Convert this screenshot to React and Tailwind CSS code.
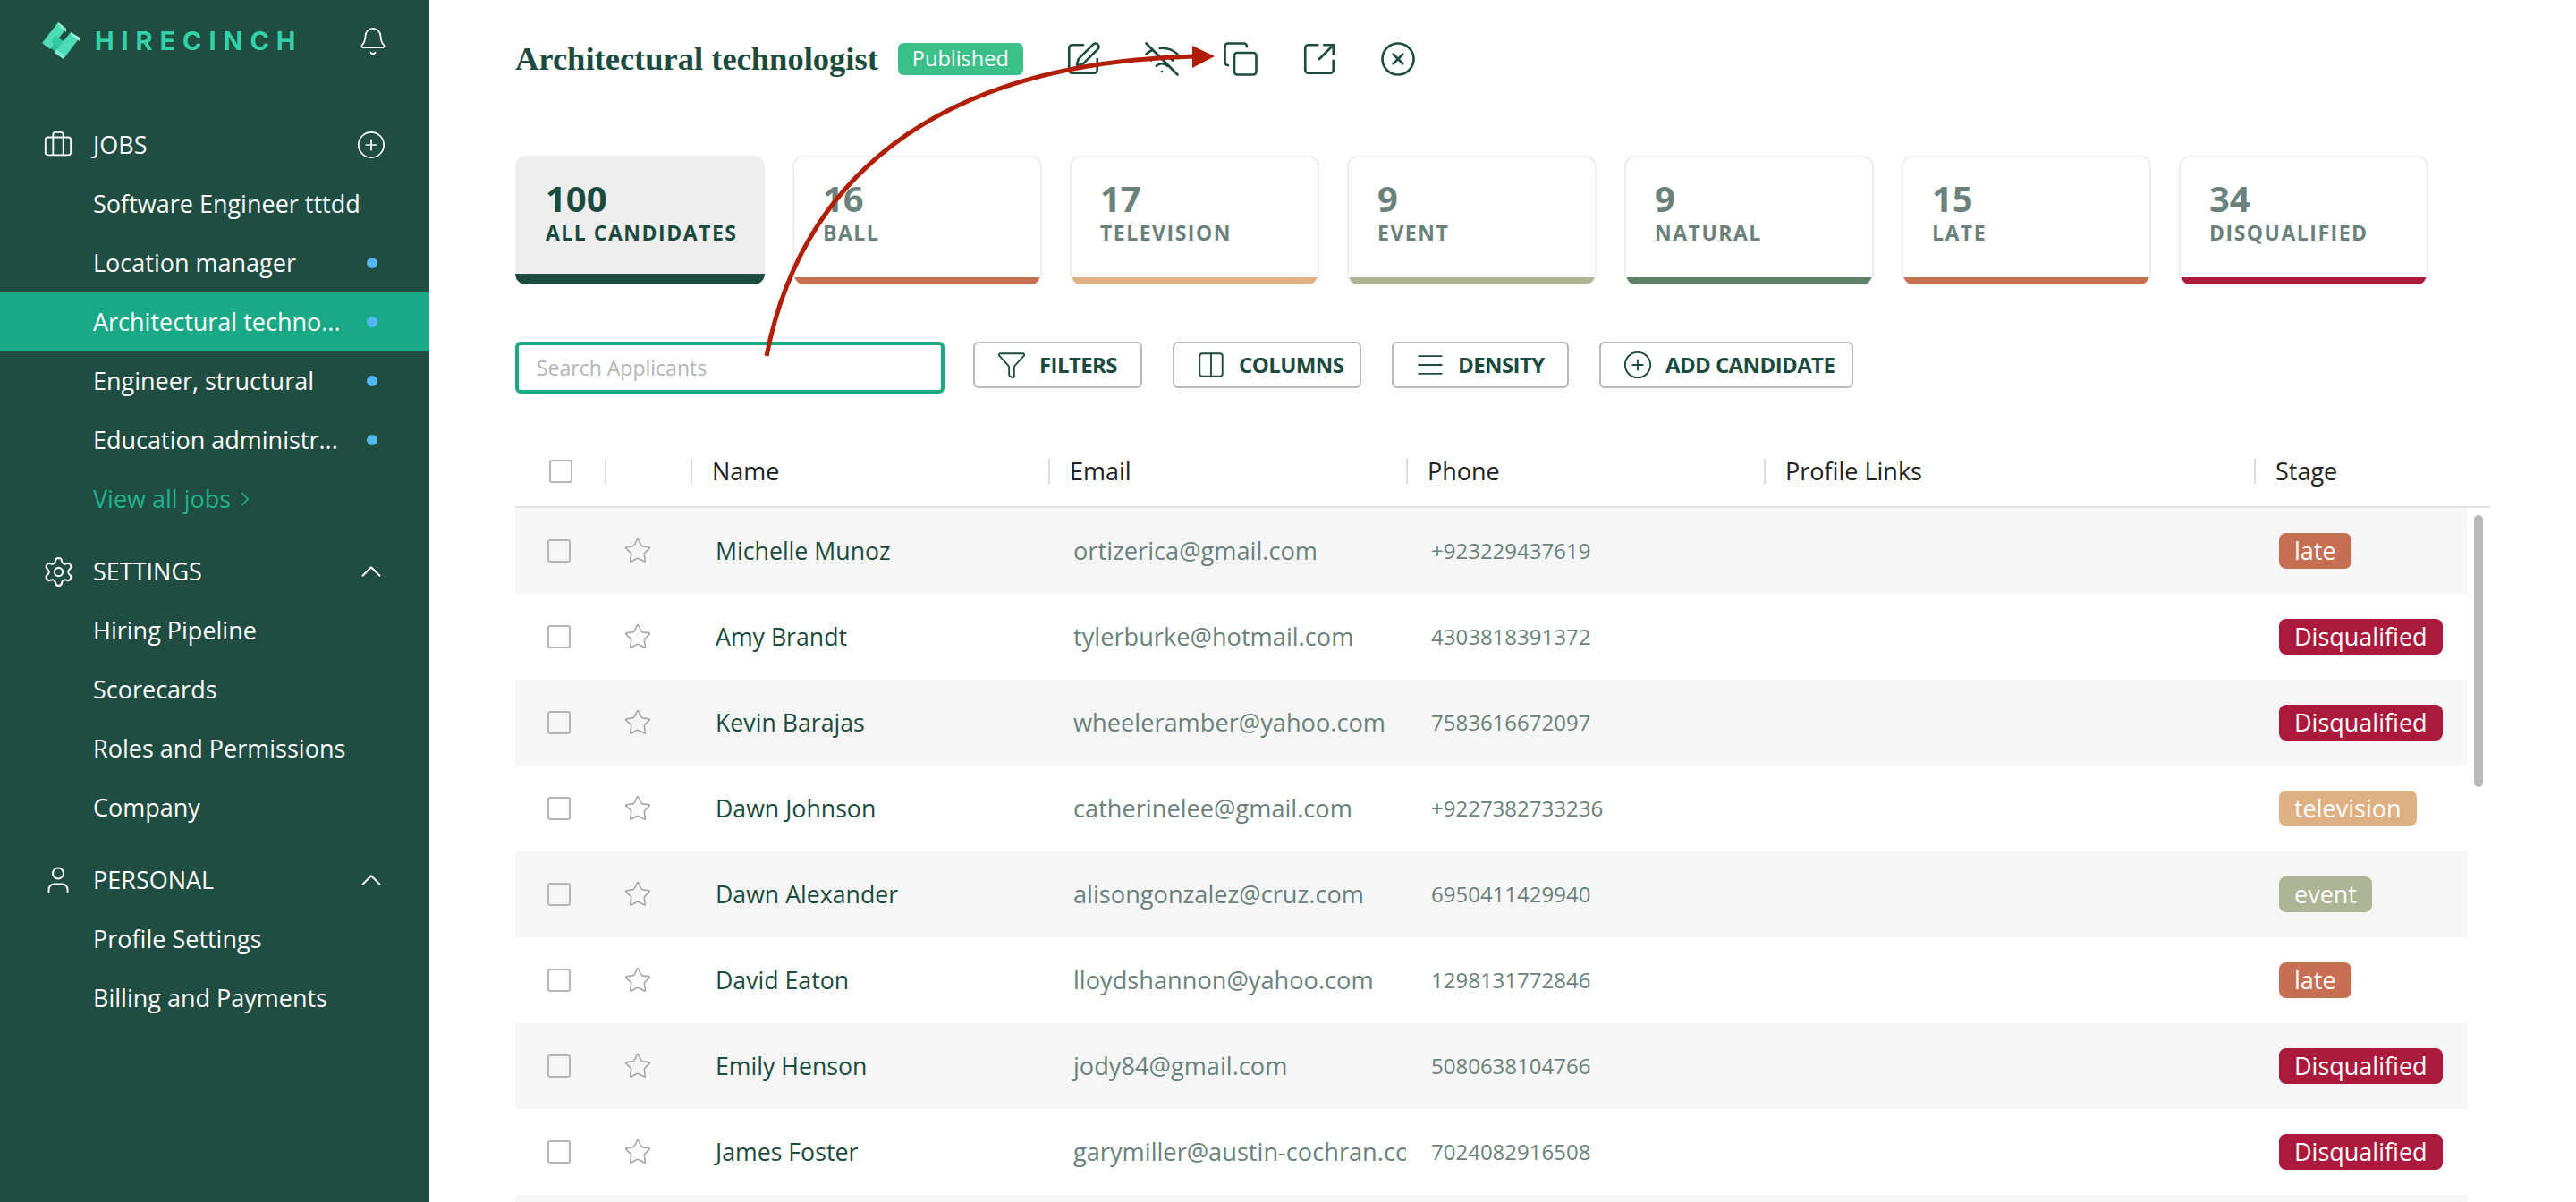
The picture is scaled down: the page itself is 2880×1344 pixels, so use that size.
import React from 'react';
import {
  Bell, Briefcase, ChevronRight, ChevronUp, CirclePlus, CircleX, Columns2, Copy,
  Funnel, Settings, SquareArrowOutUpRight, SquarePen, Star, User, WifiOff, AlignJustify,
} from 'lucide-react';

const sans = 'font-["Open_Sans",sans-serif]';

const stages = {
  late: 'bg-[#c66f53]',
  Disqualified: 'bg-[#ab1a3c]',
  television: 'bg-[#dfb083]',
  event: 'bg-[#aeb597]',
};

const candidates = [
  ['Michelle Munoz', 'ortizerica@gmail.com', '+923229437619', 'late'],
  ['Amy Brandt', 'tylerburke@hotmail.com', '4303818391372', 'Disqualified'],
  ['Kevin Barajas', 'wheeleramber@yahoo.com', '7583616672097', 'Disqualified'],
  ['Dawn Johnson', 'catherinelee@gmail.com', '+9227382733236', 'television'],
  ['Dawn Alexander', 'alisongonzalez@cruz.com', '6950411429940', 'event'],
  ['David Eaton', 'lloydshannon@yahoo.com', '1298131772846', 'late'],
  ['Emily Henson', 'jody84@gmail.com', '5080638104766', 'Disqualified'],
  ['James Foster', 'garymiller@austin-cochran.com', '7024082916508', 'Disqualified'],
];

const tabs = [
  ['100', 'All Candidates', 'bg-[#1b4b3e]', true],
  ['16', 'Ball', 'bg-[#c66f53]'],
  ['17', 'Television', 'bg-[#dfb083]'],
  ['9', 'Event', 'bg-[#aeb597]'],
  ['9', 'Natural', 'bg-[#5e8069]'],
  ['15', 'Late', 'bg-[#c66f53]'],
  ['34', 'Disqualified', 'bg-[#ab1a3c]'],
];

function Logo() {
  return (
    <svg width="44" height="44" viewBox="0 0 44 44" className="shrink-0">
      <polygon points="8,19 20,29 15,34 4,25" fill="#2fbf98" />
      <polygon points="0,24 18,1 27,8 9,31" fill="#4fdcb4" />
      <polygon points="18,1 27,8 27,12 20,6" fill="#9af0d6" />
      <polygon points="15,16 30,26 25,33 10,23" fill="#35c9a1" />
      <polygon points="14,35 32,12 42,18 24,42" fill="#4fdcb4" />
      <polygon points="32,12 42,18 42,22 33,16" fill="#9af0d6" />
      <polygon points="14,35 24,42 25,38 16,31" fill="#7ceccb" />
    </svg>
  );
}

function IconBox({ children }) {
  return <span className="flex justify-center w-[34px] shrink-0">{children}</span>;
}

function SectionHead({ icon: Icon, iconSize, label, right: Right, rightSize }) {
  return (
    <div className="flex items-center h-[66px] px-[48px]">
      <IconBox>
        <Icon size={iconSize} strokeWidth={1.3} className="shrink-0" />
      </IconBox>
      <span className="ml-[22px] flex-1 text-[27px]">{label}</span>
      <IconBox>
        <Right size={rightSize} strokeWidth={1.2} className="shrink-0" />
      </IconBox>
    </div>
  );
}

function NavItem({ label, dot, active }) {
  return (
    <div className={`flex items-center h-[66px] pl-[104px] pr-[58px] ${active ? 'bg-[#1aa986]' : ''}`}>
      <span className="flex-1 text-[27px] whitespace-nowrap">{label}</span>
      {dot && <span className="w-[12px] h-[12px] rounded-full bg-[#4fb8f0]" />}
    </div>
  );
}

function Sidebar() {
  return (
    <aside className="w-[480px] h-full shrink-0 bg-[#1f4d41] text-white">
      <div className="flex items-center h-[92px] pl-[47px] pr-[46px]">
        <Logo />
        <span className='ml-[15px] flex-1 font-["Inter",sans-serif] font-bold text-[29px] tracking-[7.9px] text-[#33d1a7]'>HIRECINCH</span>
        <IconBox>
          <Bell size={34} strokeWidth={1.2} className="shrink-0" />
        </IconBox>
      </div>
      <div className="h-[37px]" />
      <SectionHead icon={Briefcase} iconSize={34} label="JOBS" right={CirclePlus} rightSize={34} />
      <NavItem label="Software Engineer tttdd" />
      <NavItem label="Location manager" dot />
      <NavItem label="Architectural techno..." dot active />
      <NavItem label="Engineer, structural" dot />
      <NavItem label="Education administr..." dot />
      <div className="flex items-center h-[66px] pl-[104px] text-[27px] text-[#1fb48f]">
        View all jobs
        <ChevronRight size={26} strokeWidth={1.5} className="ml-[3px]" />
      </div>
      <div className="h-[15px]" />
      <SectionHead icon={Settings} iconSize={37} label="SETTINGS" right={ChevronUp} rightSize={38} />
      <NavItem label="Hiring Pipeline" />
      <NavItem label="Scorecards" />
      <NavItem label="Roles and Permissions" />
      <NavItem label="Company" />
      <div className="h-[15px]" />
      <SectionHead icon={User} iconSize={36} label="PERSONAL" right={ChevronUp} rightSize={38} />
      <NavItem label="Profile Settings" />
      <NavItem label="Billing and Payments" />
    </aside>
  );
}

function ToolButton({ icon: Icon, label, width }) {
  return (
    <button className={`flex items-center gap-[14px] h-[52px] pl-[24px] rounded-[6px] border-2 border-[#b9b9b9] bg-white text-[24px] font-bold tracking-[-0.6px] text-[#1b4b3e] whitespace-nowrap ${width}`}>
      <Icon size={34} strokeWidth={1.3} />
      {label}
    </button>
  );
}

function Checkbox() {
  return <span className="block w-[26px] h-[26px] rounded-[3px] border-2 border-[#b5b5b5]" />;
}

function TableHeader() {
  const cols = ['Name', 'Email', 'Phone', 'Profile Links', 'Stage'];
  return (
    <div className="grid grid-cols-[100px_96px_400px_400px_400px_548px_1fr] items-center h-[78px] pb-[2px] border-b-2 border-[#e2e2e2] text-[27px] text-[#222]">
      <div className="flex justify-center pl-[2px]">
        <Checkbox />
      </div>
      <div className="h-[28px] border-l-2 border-[#dcdcdc]" />
      {cols.map((c) => (
        <div key={c} className="flex items-center h-[28px] pl-[22px] border-l-2 border-[#dcdcdc]">{c}</div>
      ))}
    </div>
  );
}

function Row({ row, odd }) {
  const [name, email, phone, stage] = row;
  return (
    <div className={`grid grid-cols-[100px_96px_400px_400px_400px_548px_1fr] items-center h-[96px] w-[2182px] text-[27px] ${odd ? 'bg-[#f6f6f6]' : 'bg-white'}`}>
      <div className="flex justify-center pr-[2px]">
        <Checkbox />
      </div>
      <div className="flex justify-center pr-[22px]">
        <Star size={32} strokeWidth={1.2} className="text-[#a9a9a9]" />
      </div>
      <div className="pl-[28px] text-[26.7px] text-[#1b4b3e]">{name}</div>
      <div className="pl-[28px] pr-[11px] text-[27.2px] text-[#6b817b] overflow-hidden whitespace-nowrap">{email}</div>
      <div className="pl-[28px] text-[24px] text-[#6b817b]">{phone}</div>
      <div />
      <div className="pl-[28px]">
        <span className={`inline-flex items-center h-[40px] px-[17px] rounded-[8px] text-white ${stages[stage]}`}>{stage}</span>
      </div>
    </div>
  );
}

export default function App() {
  return (
    <div className={`relative flex w-[2880px] h-[1344px] overflow-hidden bg-white ${sans}`}>
      <Sidebar />
      <main className="flex-1 min-w-0 pl-[96px] pr-[96px]">
        <div className="flex items-center h-[132px] text-[#1b4b3e]">
          <h1 className='font-["Liberation_Serif",serif] font-bold text-[36.5px] whitespace-nowrap'>Architectural technologist</h1>
          <span className="ml-[22px] flex items-center h-[36px] px-[16px] rounded-[6px] bg-[#3cc08a] text-white text-[23.5px]">Published</span>
          <div className="ml-[46px] flex items-center gap-[46px]">
            <SquarePen size={42} strokeWidth={1.5} />
            <WifiOff size={42} strokeWidth={1.5} />
            <Copy size={42} strokeWidth={1.5} />
            <SquareArrowOutUpRight size={42} strokeWidth={1.5} />
            <CircleX size={42} strokeWidth={1.5} />
          </div>
        </div>

        <div className="flex gap-[31px] mt-[42px]">
          {tabs.map(([count, label, bar, active]) => (
            <div key={label} className={`flex flex-col w-[279px] h-[144px] rounded-[12px] overflow-hidden ${active ? 'bg-[#eeeeee]' : 'bg-white border-2 border-b-0 border-[#eeeeee]'}`}>
              <div className={`flex-1 ${active ? 'pt-[26px] pl-[34px] text-[#1b4b3e]' : 'pt-[24px] pl-[32px] text-[#6b817b]'}`}>
                <div className="text-[40px] leading-[44px] font-bold">{count}</div>
                <div className="mt-[2px] text-[23px] leading-[28px] font-bold uppercase tracking-[1.5px]">{label}</div>
              </div>
              <div className={`${active ? 'h-[12px]' : 'h-[8px]'} ${bar}`} />
            </div>
          ))}
        </div>

        <div className="flex items-start gap-[32px] mt-[64px]">
          <div className="flex items-center w-[480px] h-[58px] pl-[20px] rounded-[6px] border-4 border-[#1aa986] text-[23px] text-[#b5b5b5]">Search Applicants</div>
          <div className="flex gap-[34px]">
            <ToolButton icon={Funnel} label="FILTERS" width="w-[189px]" />
            <ToolButton icon={Columns2} label="COLUMNS" width="w-[211px]" />
            <ToolButton icon={AlignJustify} label="DENSITY" width="w-[198px]" />
            <ToolButton icon={CirclePlus} label="ADD CANDIDATE" width="w-[284px]" />
          </div>
        </div>

        <div className="mt-[50px]">
          <TableHeader />
          {candidates.map((row, i) => (
            <Row key={row[1]} row={row} odd={i % 2 === 0} />
          ))}
          <div className="h-[96px] w-[2182px] bg-[#f6f6f6]" />
        </div>
      </main>

      {/* table scrollbar */}
      <div className="absolute left-[2766px] top-[576px] w-[10px] h-[304px] rounded-full bg-[#b9b9bb]" />

      {/* annotation arrow */}
      <svg className="absolute inset-0 pointer-events-none" width="2880" height="1344" viewBox="0 0 2880 1344">
        <path d="M857 398C900 180 1070 70 1335 63" fill="none" stroke="#b01e05" strokeWidth="5" />
        <polygon points="1333,51 1358,63 1333,76" fill="#b01e05" />
      </svg>
    </div>
  );
}
